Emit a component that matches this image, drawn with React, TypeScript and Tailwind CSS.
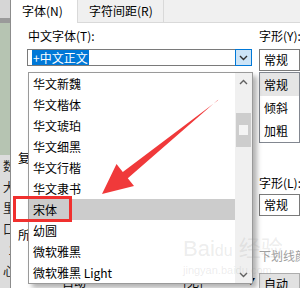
import React from "react";

const fonts = [
  "华文新魏",
  "华文楷体",
  "华文琥珀",
  "华文细黑",
  "华文行楷",
  "华文隶书",
  "宋体",
  "幼圆",
  "微软雅黑",
  "微软雅黑 Light",
];

const Chevron = ({ up, color = "#606060" }: { up?: boolean; color?: string }) => (
  <svg width="9" height="6" viewBox="0 0 9 6">
    <path
      d={up ? "M1 5 L4.5 1.5 L8 5" : "M1 1 L4.5 4.5 L8 1"}
      fill="none"
      stroke={color}
      strokeWidth="1.4"
    />
  </svg>
);

const FontList = () => (
  <div className="absolute left-0 top-[22px] w-[225px] h-[212px] bg-white border border-[#9a9a9a] flex shadow-[4px_4px_5px_rgba(0,0,0,0.3)] z-10">
    <div className="flex-1 flex flex-col">
      {fonts.map((f) => (
        <div
          key={f}
          className={`h-[21px] leading-[21px] pl-[4px] text-[12px] text-black whitespace-nowrap ${
            f === "宋体" ? "bg-[#cccccc]" : ""
          }`}
        >
          {f}
        </div>
      ))}
    </div>
    <div className="w-[17px] bg-[#f0f0f0] flex flex-col">
      <div className="h-[17px] flex items-center justify-center">
        <Chevron up />
      </div>
      <div className="flex-1 flex flex-col pt-[23px]">
        <div className="h-[34px] mx-[1px] bg-[#cdcdcd] flex items-center justify-center">
          <div className="w-[9px] h-[10px] bg-[#f4f4f4]" />
        </div>
      </div>
      <div className="h-[17px] flex items-center justify-center">
        <Chevron />
      </div>
    </div>
  </div>
);

export default function App() {
  return (
    <div className="relative w-[300px] h-[288px] overflow-hidden flex bg-white text-black font-['Noto_Sans_CJK_SC','Liberation_Sans',sans-serif]">
      {/* background window peeking on the left */}
      <div className="w-[11px] shrink-0 flex flex-col border-r border-[#8c8c8c]">
        <div className="h-[18px] bg-[#d6d6d6]" />
        <div className="h-[5px] bg-[#9a9a9a]" />
        <div className="h-[132px] bg-[#b6c4b2]" />
        <div className="flex-1 bg-[#dcdcdc] flex flex-col text-[12px] leading-[21px] text-[#202020]">
          {["数", "大", "里", "口", "1", "心"].map((c, i) => (
            <div key={i} className="h-[21px] overflow-hidden flex justify-end whitespace-nowrap">
              <span className="-mr-[5px]">{c}</span>
            </div>
          ))}
        </div>
      </div>

      <div className="flex-1 flex flex-col min-w-0">
        {/* tabs */}
        <div className="h-[23px] shrink-0 flex bg-[#f0f0f0] border-b border-[#d9d9d9] text-[12px]">
          <div className="w-[67px] h-[23px] bg-white border-r border-[#d9d9d9] pl-[11px] leading-[22px]">
            字体(N)
          </div>
          <div className="w-[86px] border-r border-[#d9d9d9] pl-[11px] leading-[22px]">
            字符间距(R)
          </div>
        </div>

        {/* body */}
        <div className="flex flex-1 min-h-0 text-[12px]">
          <div className="w-[242px] shrink-0 flex flex-col pt-[4px]">
            <div className="pl-[17px] h-[18px] leading-[18px]">中文字体(T):</div>
            <div className="relative ml-[16px] mt-[4px] w-[225px] h-[22px] border border-[#7a7a7a] flex bg-white">
              <div className="flex-1 flex items-center pl-[4px]">
                <span className="h-[15px] leading-[15px] px-[1px] bg-[#0078d7] text-white">
                  +中文正文
                </span>
              </div>
              <div className="w-[17px] -my-[1px] -mr-[1px] bg-[#cce4f7] border border-[#0078d7] flex items-center justify-center">
                <Chevron color="#303030" />
              </div>
              <FontList />
            </div>
            <div className="pl-[7px] mt-[83px] h-[18px] leading-[18px] whitespace-nowrap">复杂文种</div>
            <div className="pl-[7px] mt-[59px] h-[18px] leading-[18px] whitespace-nowrap">所有文字</div>
            <div className="mt-[29px] h-[18px] leading-[18px] flex whitespace-nowrap">
              <span className="ml-[51px]">自动</span>
              <span className="ml-[97px]">[无]</span>
              <span className="ml-[43px] text-[9px]">▼</span>
            </div>
          </div>

          <div className="flex-1 flex flex-col pl-[6px] pt-[4px] min-w-0">
            <div className="h-[18px] leading-[18px] whitespace-nowrap">字形(Y):</div>
            <div className="mt-[4px] h-[22px] border border-[#7a7a7a] pl-[4px] leading-[20px]">常规</div>
            <div className="mt-[1px] h-[73px] border border-[#828790] flex flex-col">
              <div className="h-[23px] leading-[23px] pl-[4px] bg-[#e5e5e5]">常规</div>
              <div className="h-[23px] leading-[23px] pl-[4px]">倾斜</div>
              <div className="h-[23px] leading-[23px] pl-[4px]">加粗</div>
            </div>
            <div className="mt-[19px] -ml-[6px] h-[1px] bg-[#a0a0a0]" />
            <div className="mt-[12px] h-[18px] leading-[18px] whitespace-nowrap">字形(L):</div>
            <div className="mt-[2px] h-[22px] border border-[#7a7a7a] pl-[4px] leading-[20px]">常规</div>
            <div className="mt-[20px] -ml-[6px] h-[1px] bg-[#a0a0a0]" />
            <div className="mt-[11px] h-[18px] leading-[18px] whitespace-nowrap text-[#a0a0a0]">下划线颜色(I):</div>
            <div className="mt-[8px] h-[22px] bg-[#e1e1e1] border border-[#adadad] pl-[4px] leading-[20px] whitespace-nowrap">
              自动
            </div>
          </div>
        </div>
      </div>

      {/* watermark */}
      <div className="absolute left-[183px] top-[236px] z-20 pointer-events-none flex flex-col text-[rgba(150,150,150,0.18)]">
        <div className="text-[22px] leading-[26px] whitespace-nowrap font-['Liberation_Sans','Noto_Sans_CJK_SC',sans-serif]">
          Bai<span className="text-[16px]">du</span> 经验
        </div>
        <div className="text-[11px] leading-[12px] whitespace-nowrap font-['Liberation_Sans',sans-serif]">
          jingyan.baidu.com
        </div>
      </div>

      {/* annotation */}
      <div className="absolute left-[13px] top-[196px] w-[59px] h-[26px] border-[3px] border-[#f0302e] z-20" />
      <svg className="absolute left-0 top-0 z-20 pointer-events-none" width="300" height="288" viewBox="0 0 300 288">
        <polygon
          points="218.3,99.6 217.7,100.4 122.8,172 116.5,164 102,194 134,186 127.8,178.2"
          fill="#f0393a"
        />
      </svg>
    </div>
  );
}
